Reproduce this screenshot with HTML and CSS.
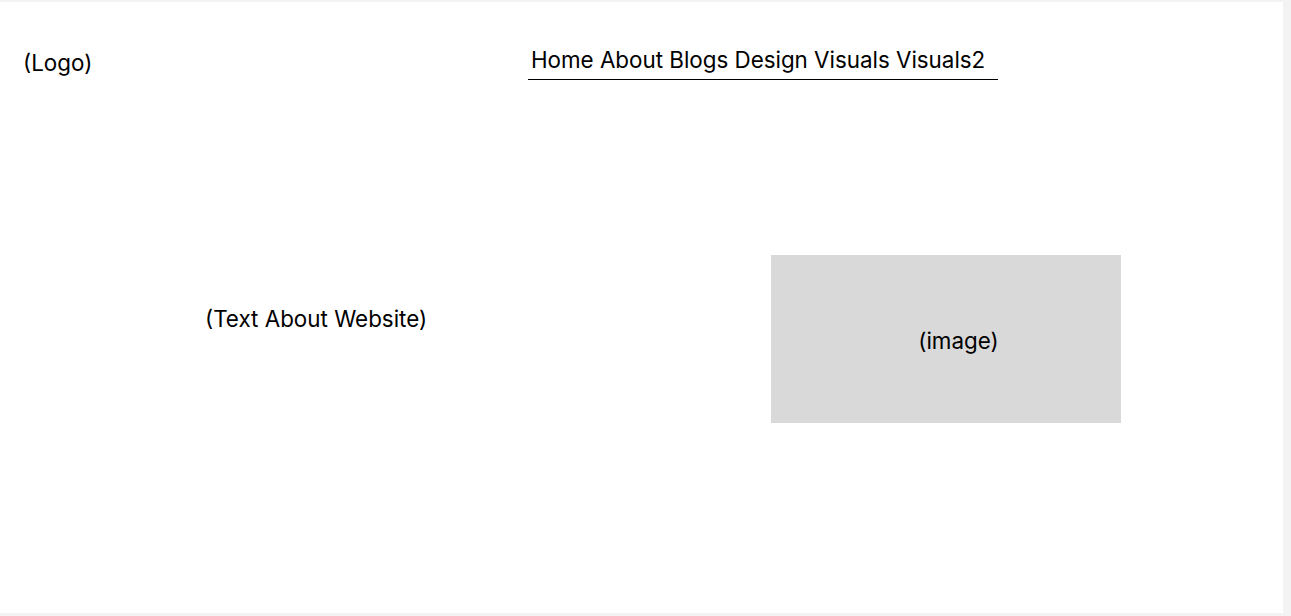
FILE: index.html
```html
<!DOCTYPE html>
<html>
<head>
<meta charset="utf-8">
<link rel="stylesheet" href="styles.css">
</head>
<body>
<div class="frame">
  <header class="header">
    <div class="logo">(Logo)</div>
    <nav class="nav">
      <span>Home</span> <span>About</span> <span>Blogs</span> <span>Design</span> <span>Visuals</span> <span>Visuals2</span>
    </nav>
  </header>
  <main class="hero">
    <div class="hero-text">(Text About Website)</div>
    <div class="hero-image"><span>(image)</span></div>
  </main>
</div>
</body>
</html>
```
FILE: styles.css
```css
html, body {
  margin: 0;
  padding: 0;
}
body {
  background: #f3f3f3;
  font-family: "Inter", "Liberation Sans", sans-serif;
  color: #000;
  width: 1291px;
  height: 616px;
  overflow: hidden;
}
.frame {
  margin-top: 2px;
  width: 1283px;
  height: 611px;
  background: #fff;
  display: flex;
  flex-direction: column;
}
.header {
  display: flex;
  align-items: flex-start;
  padding-top: 44px;
  height: 34px;
}
.logo {
  font-size: 22.4px;
  line-height: 28px;
  margin-left: 23px;
  padding-top: 3px;
  width: 505px;
}
.nav {
  font-size: 22.4px;
  line-height: 28px;
  width: 467px;
  padding-left: 3px;
  border-bottom: 1px solid #000;
  height: 33px;
  white-space: nowrap;
  letter-spacing: -0.02px;
}
.hero {
  display: flex;
  align-items: flex-start;
  padding-top: 175px;
}
.hero-text {
  font-size: 22.4px;
  line-height: 28px;
  margin-left: 205px;
  margin-top: 50px;
  width: 566px;
}
.hero-image {
  width: 350px;
  height: 168px;
  background: #d9d9d9;
  display: flex;
  align-items: center;
  justify-content: center;
  font-size: 22.4px;
  line-height: 28px;
}
.hero-image span {
  margin-left: 25px;
  margin-top: 3px;
}
```
